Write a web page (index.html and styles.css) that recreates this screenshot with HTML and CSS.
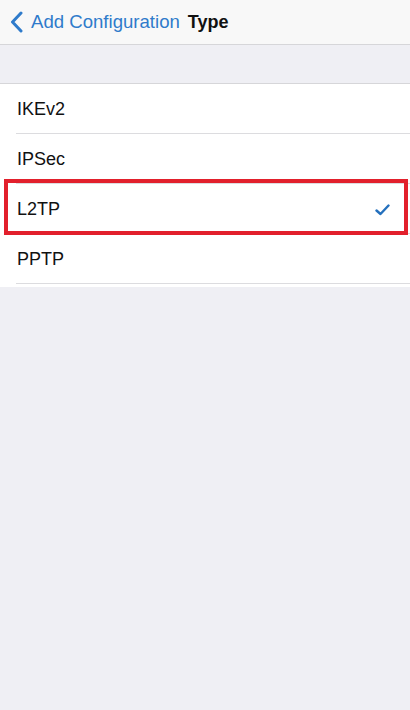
FILE: index.html
```html
<!DOCTYPE html>
<html lang="en">
<head>
    <meta charset="UTF-8">
    <meta name="viewport" content="width=device-width, initial-scale=1.0">
    <title>Type</title>
    <link rel="stylesheet" href="styles.css">
</head>
<body>
    <!-- Navbar -->
    <nav class="navbar">
        <a class="back" href="#">
            <svg class="chevron" width="13" height="22" viewBox="0 0 13 22">
                <path d="M11 2 L2.5 11 L11 20" fill="none" stroke="currentColor" stroke-width="3" stroke-linecap="round" stroke-linejoin="round"/>
            </svg>
            <span>Add Configuration</span>
        </a>
        <span class="title">Type</span>
    </nav>

    <div class="spacer"></div>

    <!-- Lista de tipos -->
    <ul class="list">
        <li class="row"><span>IKEv2</span></li>
        <li class="row"><span>IPSec</span></li>
        <li class="row selected">
            <span>L2TP</span>
            <svg class="check" width="15" height="12" viewBox="0 0 15 12">
                <path d="M1.5 6.5 L5.5 10 L13.5 1.5" fill="none" stroke="currentColor" stroke-width="2.4" stroke-linecap="round" stroke-linejoin="round"/>
            </svg>
        </li>
        <li class="row"><span>PPTP</span></li>
    </ul>
</body>
</html>
```
FILE: styles.css
```css
/* Reset básico */
* {
    margin: 0;
    padding: 0;
    box-sizing: border-box;
}

body {
    font-family: 'Liberation Sans', Arial, sans-serif;
    background-color: #efeff4;
    color: #111;
    min-height: 100vh;
}

/* Navbar */
.navbar {
    height: 45px;
    background-color: #f8f8f8;
    border-bottom: 1px solid #d6d6d9;
    display: flex;
    align-items: center;
    padding-left: 10px;
    gap: 8px;
}

.navbar .back {
    display: flex;
    align-items: center;
    gap: 8px;
    color: #2f7bcb;
    text-decoration: none;
    font-size: 18.6px;
}

.navbar .chevron {
    display: block;
}

.navbar .title {
    font-size: 18px;
    font-weight: bold;
    color: #111;
}

.spacer {
    height: 39px;
    border-bottom: 1px solid #d6d6d9;
}

/* Lista */
.list {
    list-style: none;
    background-color: #fff;
    padding-bottom: 3px;
}

.row {
    position: relative;
    height: 50px;
    margin-left: 16px;
    padding-right: 20px;
    padding-top: 2px;
    display: flex;
    align-items: center;
    justify-content: space-between;
    border-bottom: 1px solid #dcdcdf;
    font-size: 18px;
}

.row span {
    margin-left: 1px;
}

.row .check {
    color: #2470bd;
}

/* Destaque vermelho */
.row.selected::after {
    content: '';
    position: absolute;
    top: -5px;
    bottom: -2px;
    left: -12px;
    right: 2px;
    border: 4px solid #e2202c;
}
```
